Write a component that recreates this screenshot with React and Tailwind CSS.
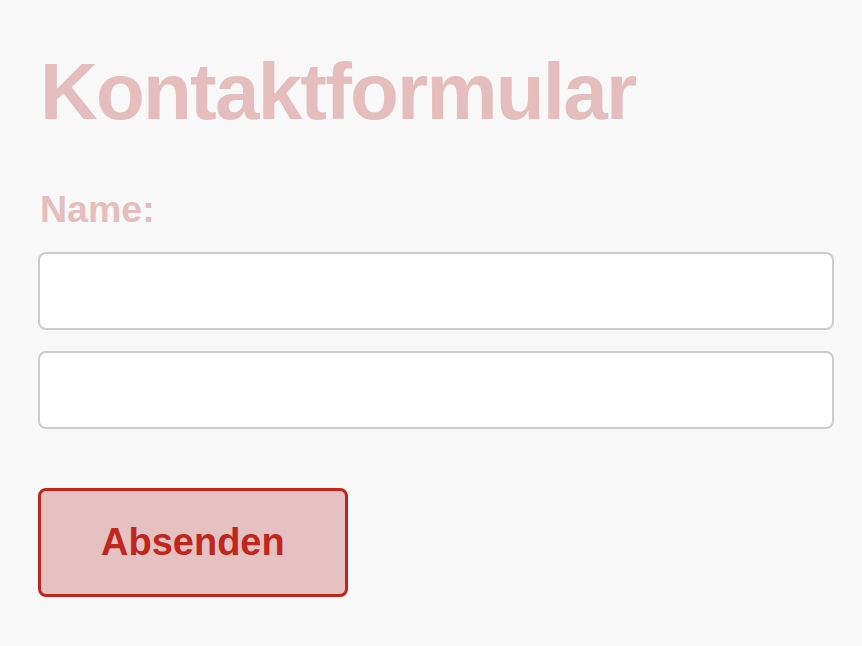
import React from 'react';

const App = () => {
  return (
    <div className="min-h-screen bg-[#f8f8f8] pl-[38px] pr-[28px] pt-[52px] font-['Liberation_Sans',Arial,sans-serif]">
      <h1 className="text-[80px] leading-none font-bold tracking-[-1.8px] text-[#e5bdbd] pl-[2px]">Kontaktformular</h1>
      <form className="mt-[59px]" onSubmit={(e) => e.preventDefault()}>
        <label className="block text-[37.5px] leading-none font-bold text-[#e5bdbd] pl-[2px]">Name:</label>
        <input
          type="text"
          className="mt-[23px] block w-full h-[78px] bg-white border-2 border-[#cccccc] rounded-lg outline-none"
        />
        <input
          type="text"
          className="mt-[21px] block w-full h-[78px] bg-white border-2 border-[#cccccc] rounded-lg outline-none"
        />
        <button
          type="submit"
          className="mt-[59px] block border-[3px] border-[#c0261c] bg-[#e5c1c1] rounded-lg px-[60px] pt-[32px] pb-[33px] text-[38px] leading-none font-bold text-[#c0261c]"
        >
          Absenden
        </button>
      </form>
    </div>
  );
};

export default App;
